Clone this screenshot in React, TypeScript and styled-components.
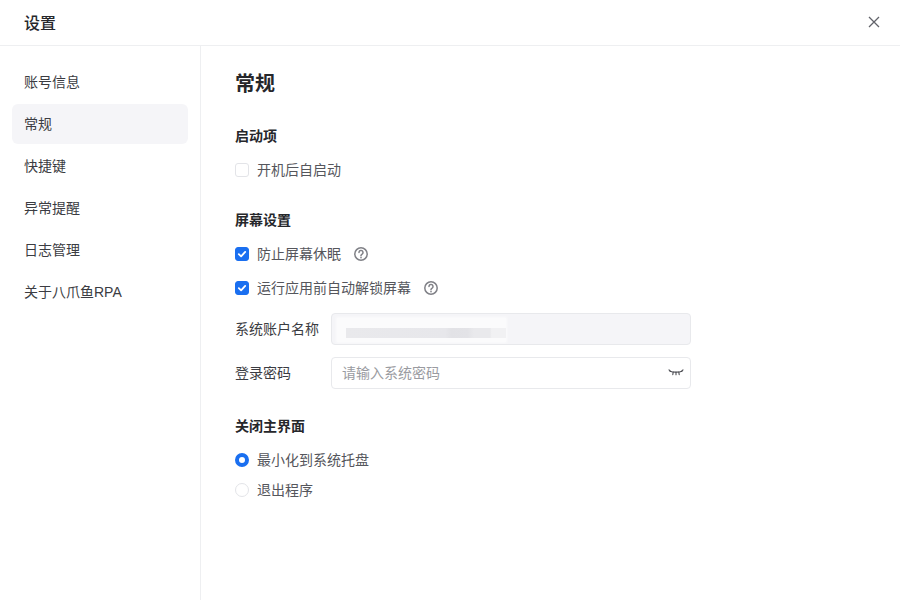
import React from 'react';
import styled, { createGlobalStyle } from 'styled-components';

const GlobalStyle = createGlobalStyle`
  html, body {
    margin: 0;
    padding: 0;
    background: #fff;
    font-family: "Liberation Sans", "Noto Sans CJK SC", sans-serif;
  }
`;

const Window = styled.div`
  width: 900px;
  height: 600px;
  display: flex;
  flex-direction: column;
  overflow: hidden;
  background: #fff;
`;

const Header = styled.header`
  flex: none;
  display: flex;
  align-items: center;
  justify-content: space-between;
  padding: 0 19px 2px 24px;
  height: 43px;
  border-bottom: 1px solid #eeeff1;
`;

const HeaderTitle = styled.h1`
  margin: 0;
  font-size: 16px;
  font-weight: 500;
  color: #26272b;
`;

const CloseIcon = styled.svg`
  width: 14px;
  height: 14px;
  display: block;
`;

const Body = styled.div`
  flex: 1;
  display: flex;
  min-height: 0;
`;

const Sidebar = styled.nav`
  width: 200px;
  flex: none;
  border-right: 1px solid #eeeff1;
  padding: 16px 0 0;
`;

const NavList = styled.ul`
  list-style: none;
  margin: 0;
  padding: 0 12px;
  display: flex;
  flex-direction: column;
  gap: 2px;
`;

const NavItem = styled.li<{ $active?: boolean }>`
  height: 40px;
  line-height: 40px;
  padding: 0 12px;
  border-radius: 6px;
  font-size: 14px;
  color: #3b3c42;
  background: ${({ $active }) => ($active ? '#f5f5f8' : 'transparent')};
`;

const Main = styled.main`
  flex: 1;
  padding: 24px 34px 0;
`;

const PageTitle = styled.h2`
  margin: 0;
  height: 28px;
  line-height: 28px;
  font-size: 20px;
  font-weight: 700;
  color: #26272b;
`;

const Section = styled.section<{ $gap: number }>`
  margin-top: ${({ $gap }) => $gap}px;
  display: flex;
  flex-direction: column;
`;

const SectionTitle = styled.h3`
  margin: 0 0 7px;
  height: 20px;
  line-height: 20px;
  font-size: 14px;
  font-weight: 700;
  color: #26272b;
`;

const OptionRow = styled.div`
  height: 34px;
  display: flex;
  align-items: center;
  gap: 8px;
  font-size: 14px;
  color: #55565c;
`;

const OptionText = styled.span`
  padding-bottom: 2px;
`;

const RadioGroup = styled.div`
  margin-top: 2px;
  display: flex;
  flex-direction: column;
  ${OptionRow} {
    height: 30px;
  }
`;

const CheckBox = styled.span<{ $checked?: boolean }>`
  width: 14px;
  height: 14px;
  box-sizing: border-box;
  border-radius: 3px;
  display: flex;
  align-items: center;
  justify-content: center;
  background: ${({ $checked }) => ($checked ? '#1a6ff0' : '#fff')};
  border: 1px solid ${({ $checked }) => ($checked ? '#1a6ff0' : '#e3e4e8')};
`;

const Radio = styled.span<{ $checked?: boolean }>`
  width: 14px;
  height: 14px;
  box-sizing: border-box;
  border-radius: 50%;
  background: #fff;
  border: ${({ $checked }) => ($checked ? '4px solid #1a6ff0' : '1px solid #e3e4e8')};
`;

const HelpIcon = styled.svg`
  width: 14px;
  height: 14px;
  margin-left: 5px;
  display: block;
`;

const Fields = styled.div`
  margin-top: 8px;
  display: flex;
  flex-direction: column;
  gap: 12px;
`;

const FieldRow = styled.div`
  display: flex;
  align-items: center;
  height: 32px;
  font-size: 14px;
  color: #3b3c42;
`;

const FieldLabel = styled.label`
  width: 96px;
  flex: none;
  padding-bottom: 2px;
`;

const InputBox = styled.div<{ $disabled?: boolean }>`
  position: relative;
  width: 360px;
  height: 32px;
  box-sizing: border-box;
  padding: 0 10px 0 11px;
  display: flex;
  align-items: center;
  justify-content: space-between;
  border: 1px solid #e8e9ec;
  border-radius: 4px;
  overflow: hidden;
  background: ${({ $disabled }) => ($disabled ? '#f5f5f8' : '#fff')};
`;

const Placeholder = styled.span`
  font-size: 14px;
  color: #9a9ba1;
  margin-left: -1px;
  padding-bottom: 2px;
`;

const RedactPatch = styled.div`
  position: absolute;
  left: 4px;
  top: 3px;
  width: 171px;
  height: 26px;
  background: #fbfbfc;
  filter: blur(1px);
`;

const RedactBand = styled.div`
  position: absolute;
  left: 14px;
  top: 14px;
  width: 160px;
  height: 10px;
  background: linear-gradient(90deg, #e9e9ec 0%, #e7e7eb 62%, #e2e2e6 66%, #e3e3e7 76%, #e9e9ec 80%, #e9e9ec 90%, #f1f1f3 91%, #f1f1f3 100%);
`;

const EyeIcon = styled.svg`
  width: 16px;
  height: 10px;
  display: block;
  margin-right: -4px;
`;

const navItems = ['账号信息', '常规', '快捷键', '异常提醒', '日志管理', '关于八爪鱼RPA'];

const Help = () => (
  <HelpIcon viewBox="0 0 14 14" fill="none" stroke="#808187" strokeWidth="1.5" strokeLinecap="round">
    <circle cx="7" cy="7" r="6.2" />
    <path d="M5 5.4a2 2 0 1 1 3.1 1.7c-.7.4-1.1.8-1.1 1.5v.2" />
    <path d="M7 10.6v.1" strokeWidth="1.6" />
  </HelpIcon>
);

const Check = () => (
  <svg width="10" height="10" viewBox="0 0 10 10" fill="none" stroke="#fff" strokeWidth="1.8" strokeLinecap="round" strokeLinejoin="round">
    <path d="M1.8 5.2 4.1 7.4 8.2 2.9" />
  </svg>
);

export default function App() {
  return (
    <>
      <GlobalStyle />
      <Window>
        <Header>
          <HeaderTitle>设置</HeaderTitle>
          <CloseIcon viewBox="0 0 14 14" fill="none" stroke="#62636a" strokeWidth="1.3">
            <path d="M2 2l10 10M12 2 2 12" />
          </CloseIcon>
        </Header>
        <Body>
          <Sidebar>
            <NavList>
              {navItems.map((item) => (
                <NavItem key={item} $active={item === '常规'}>{item}</NavItem>
              ))}
            </NavList>
          </Sidebar>
          <Main>
            <PageTitle>常规</PageTitle>
            <Section $gap={28}>
              <SectionTitle>启动项</SectionTitle>
              <OptionRow>
                <CheckBox />
                <OptionText>开机后自启动</OptionText>
              </OptionRow>
            </Section>
            <Section $gap={23}>
              <SectionTitle>屏幕设置</SectionTitle>
              <OptionRow>
                <CheckBox $checked><Check /></CheckBox>
                <OptionText>防止屏幕休眠</OptionText>
                <Help />
              </OptionRow>
              <OptionRow>
                <CheckBox $checked><Check /></CheckBox>
                <OptionText>运行应用前自动解锁屏幕</OptionText>
                <Help />
              </OptionRow>
              <Fields>
                <FieldRow>
                  <FieldLabel>系统账户名称</FieldLabel>
                  <InputBox $disabled>
                    <RedactPatch />
                    <RedactBand />
                  </InputBox>
                </FieldRow>
                <FieldRow>
                  <FieldLabel>登录密码</FieldLabel>
                  <InputBox>
                    <Placeholder>请输入系统密码</Placeholder>
                    <EyeIcon viewBox="0 0 16 10" fill="none" stroke="#4a4b51" strokeWidth="1.1" strokeLinecap="round">
                      <path d="M2 3.2C5 4.4 11 4.4 14 3.2" />
                      <path d="M1 1.8 2.6 3.4M5.2 4 4.8 6.6M8 4.3v2.5M10.8 4 11.2 6.6M15 1.8 13.4 3.4" />
                    </EyeIcon>
                  </InputBox>
                </FieldRow>
              </Fields>
            </Section>
            <Section $gap={27}>
              <SectionTitle>关闭主界面</SectionTitle>
              <RadioGroup>
                <OptionRow>
                  <Radio $checked />
                  <OptionText>最小化到系统托盘</OptionText>
                </OptionRow>
                <OptionRow>
                  <Radio />
                  <OptionText>退出程序</OptionText>
                </OptionRow>
              </RadioGroup>
            </Section>
          </Main>
        </Body>
      </Window>
    </>
  );
}
